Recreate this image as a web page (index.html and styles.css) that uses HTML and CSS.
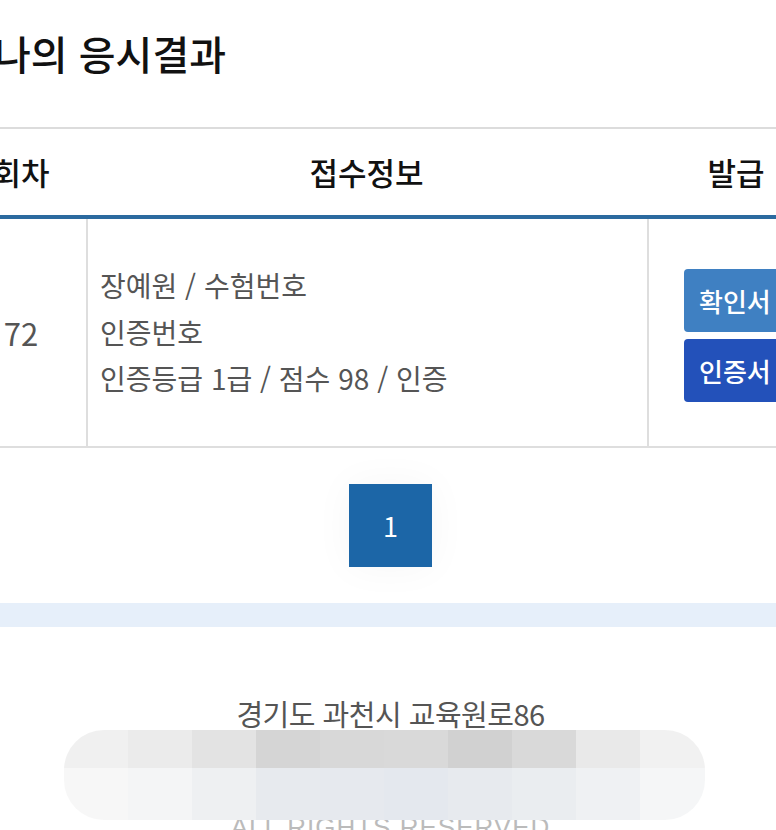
FILE: index.html
```html
<!DOCTYPE html>
<html lang="ko">
<head>
    <meta charset="UTF-8">
    <meta name="viewport" content="width=device-width, initial-scale=1.0">
    <title>나의 응시결과</title>
    <link rel="stylesheet" href="styles.css">
</head>
<body>

    <div class="page">
        <h1 class="title">나의 응시결과</h1>

        <table class="result">
            <thead>
                <tr>
                    <th class="col-round">회차</th>
                    <th class="col-info">접수정보</th>
                    <th class="col-issue">발급</th>
                </tr>
            </thead>
            <tbody>
                <tr>
                    <td class="round">72</td>
                    <td class="info">
                        <p>장예원 / 수험번호</p>
                        <p>인증번호</p>
                        <p>인증등급 1급 / 점수 98 / 인증</p>
                    </td>
                    <td class="issue">
                        <div class="btns">
                            <button type="button" class="btn btn-confirm">확인서</button>
                            <button type="button" class="btn btn-cert">인증서</button>
                        </div>
                    </td>
                </tr>
            </tbody>
        </table>

        <div class="paging">
            <a class="page-num">1</a>
        </div>

        <div class="band"></div>

        <footer class="footer">
            <p class="address">경기도 과천시 교육원로86</p>
            <div class="footer-info"></div>
            <p class="copy">ALL RIGHTS RESERVED</p>
            <!-- blurred contact info -->
            <div class="mosaic">
                <div class="mosaic-top"></div>
                <div class="mosaic-bottom"></div>
            </div>
        </footer>
    </div>

</body>
</html>
```

FILE: styles.css
```css
body { margin: 0; overflow: hidden; background: #fff; font-family: "Noto Sans CJK KR", "Noto Sans", sans-serif; color: #111; }
.page { width: 869px; margin-left: -44px; }

.title { margin: 0; padding: 30px 0 0 38px; height: 127px; box-sizing: border-box; font-size: 40px; font-weight: 500; line-height: 46px; color: #111; }

.result { width: 869px; table-layout: fixed; border-collapse: separate; border-spacing: 0; border-top: 2px solid #dcdcdc; }
.result th { padding: 0; height: 86px; line-height: 86px; font-size: 31px; font-weight: 500; color: #111; text-align: center; border-bottom: 4px solid #2b6a9f; box-sizing: border-box; }
.result th.col-round { width: 130px; }
.result th.col-info { width: 561px; }
.result th.col-issue { width: 178px; }
.result td { border-bottom: 2px solid #dedede; vertical-align: middle; }
.round { text-align: center; font-size: 31px; color: #555; }
.info { border-left: 2px solid #dedede; padding: 43px 0 44px 12px; }
.info p { margin: 0; font-size: 28px; line-height: 46.5px; color: #555; }
.issue { border-left: 2px solid #dedede; padding: 0 0 0 35px; }
.btns { display: flex; flex-direction: column; gap: 7px; padding-top: 6px; }
.btn { width: 110px; height: 63px; padding: 0 0 0 15px; border: none; border-radius: 4px; font-family: inherit; font-size: 26px; font-weight: 500; color: #fff; text-align: left; }
.btn-confirm { background: #3f80c2; }
.btn-cert { background: #2351ba; }

.paging { display: flex; justify-content: center; padding: 36px 0; }
.page-num { display: block; width: 83px; height: 83px; line-height: 83px; text-align: center; background: #1c66a7; color: #fff; font-size: 27px; box-shadow: 0 0 40px rgba(0,0,0,0.04); }

.band { height: 24px; background: #e6effa; }

.footer { position: relative; padding-top: 66px; text-align: center; }
.address { margin: 0; font-size: 29px; line-height: 40px; letter-spacing: -0.5px; color: #555; }
.footer-info { height: 79px; }
.copy { margin: 0; font-family: "Liberation Sans", Arial, sans-serif; font-size: 26px; line-height: 30px; letter-spacing: 1px; color: #bbb; }
.mosaic { position: absolute; left: 108px; top: 103px; width: 641px; height: 90px; border-radius: 40px; overflow: hidden; }
.mosaic-top { height: 38px; background: linear-gradient(to right, #f0f0f0 0 64px, #ebebeb 64px 128px, #e3e3e3 128px 192px, #d5d5d5 192px 256px, #d8d8d8 256px 320px, #d9d9d9 320px 384px, #d1d1d1 384px 448px, #d9d9d9 448px 512px, #e9e9e9 512px 576px, #f1f1f1 576px); }
.mosaic-bottom { height: 52px; background: linear-gradient(to right, #f7f7f7 0 64px, #f4f5f6 64px 128px, #eef0f2 128px 192px, #e7eaee 192px 256px, #e6e9ee 256px 320px, #e4e8ee 320px 384px, #e7eaee 384px 448px, #eaedf0 448px 512px, #eff1f3 512px 576px, #f5f6f7 576px); }
```
